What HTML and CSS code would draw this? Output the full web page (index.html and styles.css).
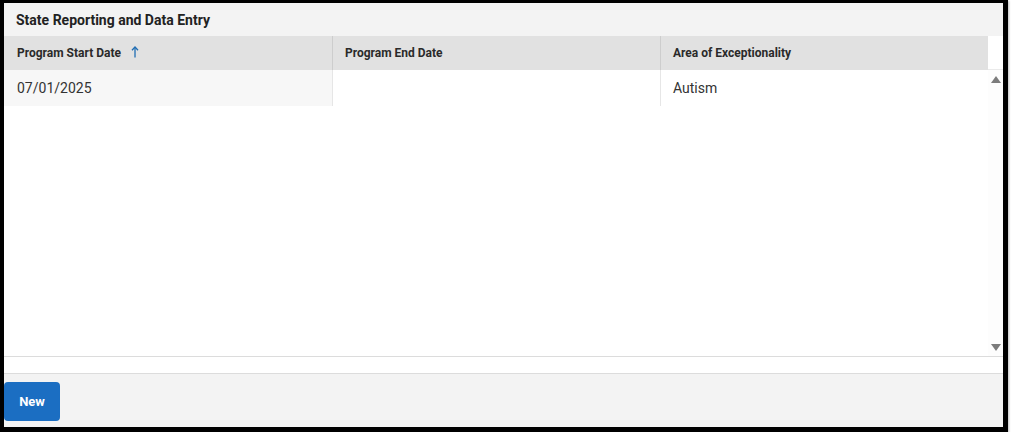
FILE: index.html
```html
<!DOCTYPE html>
<html>
<head>
<meta charset="utf-8">
<link rel="stylesheet" href="styles.css">
</head>
<body>
<div class="frame">
  <div class="title">State Reporting and Data Entry</div>
  <div class="grid">
    <div class="grid-main">
      <div class="head-row">
        <div class="hcell c1">Program Start Date
          <svg class="sort" width="8" height="12" viewBox="0 0 8 12"><path d="M4 1 L4 11.5" stroke="#1f6db3" stroke-width="1.3" fill="none"/><path d="M1 4.2 L4 1 L7 4.2" stroke="#1f6db3" stroke-width="1.3" fill="none"/></svg>
        </div>
        <div class="hcell c2">Program End Date</div>
        <div class="hcell c3">Area of Exceptionality</div>
      </div>
      <div class="row">
        <div class="cell c1 first">07/01/2025</div>
        <div class="cell c2"></div>
        <div class="cell c3">Autism</div>
      </div>
    </div>
    <div class="scrollbar">
      <div class="sb-head"></div>
      <svg class="arrow" width="10" height="7" viewBox="0 0 10 7"><path d="M0 7 L5 0 L10 7 Z" fill="#7c7c7c"/></svg>
      <div class="sb-track"></div>
      <svg class="arrow" width="10" height="7" viewBox="0 0 10 7"><path d="M0 0 L5 7 L10 0 Z" fill="#7c7c7c"/></svg>
    </div>
  </div>
  <div class="gap"></div>
  <div class="footer">
    <button class="btn">New</button>
  </div>
</div>
</body>
</html>
```
FILE: styles.css
```css
html, body {
  margin: 0;
  padding: 0;
  background: #ffffff;
}
body {
  font-family: Roboto, "Liberation Sans", Arial, sans-serif;
  color: #2b2b2b;
}
.frame {
  width: 999px;
  height: 424px;
  border-style: solid;
  border-color: #000;
  border-width: 3px 5px 5px 4px;
  display: flex;
  flex-direction: column;
  background: #fff;
  box-shadow: 1px 1px 2px rgba(0,0,0,0.25);
}
.title {
  height: 33px;
  flex: none;
  background: #f3f3f3;
  font-size: 14px;
  font-weight: 700;
  color: #222;
  padding-left: 12px;
  display: flex;
  align-items: center;
  box-sizing: border-box;
}
.grid {
  height: 321px;
  flex: none;
  display: flex;
  border-bottom: 1px solid #dcdcdc;
  box-sizing: border-box;
}
.grid-main {
  width: 984px;
  flex: none;
  display: flex;
  flex-direction: column;
}
.head-row {
  height: 34px;
  display: flex;
  background: #e1e1e1;
}
.c1 { width: 329px; padding-left: 13px; }
.c2 { width: 328px; padding-left: 12px; }
.c3 { width: 327px; padding-left: 12px; }
.hcell {
  box-sizing: border-box;
  display: flex;
  align-items: center;
  font-size: 12px;
  font-weight: 700;
  color: #2a2a2a;
  border-right: 1px solid #cdcdcd;
}
.hcell:last-child {
  border-right: none;
}
.sort {
  margin-left: 10px;
  margin-top: -2px;
}
.row {
  height: 36px;
  display: flex;
}
.cell {
  box-sizing: border-box;
  display: flex;
  align-items: center;
  font-size: 14px;
  color: #333;
  border-right: 1px solid #e6e6e6;
  background: #fff;
}
.cell.first {
  background: #f7f7f7;
}
.cell:last-child {
  border-right: none;
}
.scrollbar {
  width: 15px;
  flex: none;
  display: flex;
  flex-direction: column;
  align-items: center;
  background: #fdfdfd;
}
.sb-head {
  height: 34px;
  width: 100%;
  background: #fff;
  border-bottom: 1px solid #eaeaea;
  box-sizing: border-box;
  margin-bottom: 6px;
}
.sb-track {
  flex: 1;
}
.scrollbar .arrow:last-child {
  margin-bottom: 5px;
}
.gap {
  height: 17px;
  flex: none;
  background: #fff;
  border-bottom: 1px solid #dcdcdc;
  box-sizing: border-box;
}
.footer {
  flex: 1;
  background: #f3f3f3;
  padding-top: 8px;
  box-sizing: border-box;
}
.btn {
  display: block;
  width: 56px;
  height: 39px;
  margin-left: 0;
  background: #1b6ec2;
  color: #fff;
  border: none;
  border-radius: 4px;
  font-family: Roboto, "Liberation Sans", Arial, sans-serif;
  font-size: 13px;
  font-weight: 700;
  padding: 0;
}
```
